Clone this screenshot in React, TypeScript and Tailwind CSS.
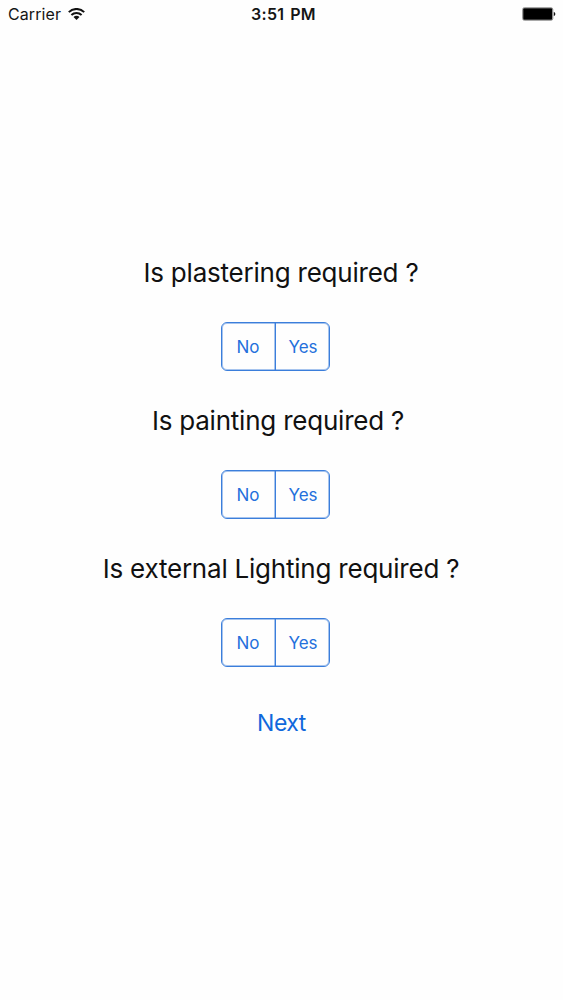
import type { ReactElement } from "react";

interface Question {
  id: string;
  label: string;
  labelClassName: string;
}

const QUESTIONS: readonly Question[] = [
  { id: "plastering", label: "Is plastering required ?", labelClassName: "w-[562px]" },
  { id: "painting", label: "Is painting required ?", labelClassName: "w-[556px]" },
  { id: "lighting", label: "Is external Lighting required ?", labelClassName: "w-[562px]" },
];

function WifiIcon(): ReactElement {
  return (
    <svg className="ml-[7px] h-3 w-[17px]" fill="none" viewBox="0 0 17 12">
      <path d="M0.8 4.1C5.1 -0.1 11.9 -0.1 16.2 4.1" stroke="#111" strokeWidth="2" />
      <path d="M3.4 6.9C6.3 4.2 10.7 4.2 13.6 6.9" stroke="#111" strokeWidth="2" />
      <path d="M5.5 9C7.2 7.3 9.8 7.3 11.5 9L8.5 11.9Z" fill="#111" />
    </svg>
  );
}

function BatteryIcon(): ReactElement {
  return (
    <svg className="h-[14px] w-[34px]" viewBox="0 0 34 14">
      <rect fill="#fff" height="12.6" rx="1.8" stroke="#777" strokeWidth="0.8" width="30.2" x="0.6" y="0.7" />
      <rect fill="#000" height="11.4" rx="1" width="29" x="1.2" y="1.3" />
      <path d="M31.8 5C33.8 5.2 33.8 8.8 31.8 9Z" fill="#111" />
    </svg>
  );
}

function StatusBar(): ReactElement {
  return (
    <header className="grid h-7 grid-cols-3 items-center pl-2 pr-[7px] text-[#151515]">
      <div className="flex items-center text-base tracking-[0.1px]">
        Carrier
        <WifiIcon />
      </div>
      <div className="pl-[3px] text-center text-base font-semibold tracking-[0.3px] [word-spacing:1.5px]">3:51 PM</div>
      <div className="flex justify-end">
        <BatteryIcon />
      </div>
    </header>
  );
}

function SegmentedControl(): ReactElement {
  return (
    <div className="ml-[221px] mt-[29px] flex h-[49px] w-[109px] rounded-md border border-[#3b7edb] text-[17px] text-[#2470dc] shadow-[inset_0_0_0_1px_#3b7edb73]">
      <button className="w-[54px] border-r border-[#3b7edb] pr-px pt-0.5 shadow-[inset_-1px_0_0_0_#3b7edb73]" type="button">
        No
      </button>
      <button className="flex-1 pl-px pt-0.5" type="button">
        Yes
      </button>
    </div>
  );
}

export default function App(): ReactElement {
  return (
    <main className="h-[1000px] w-[563px] overflow-hidden bg-[#fefefe] font-['Inter',sans-serif]">
      <StatusBar />
      <div className="mt-[225px]">
        {QUESTIONS.map((question) => (
          <section className="h-[148px]" key={question.id}>
            <h2 className={`${question.labelClassName} h-10 text-center text-[26px] leading-10 tracking-[-0.22px] text-[#111]`}>
              {question.label}
            </h2>
            <SegmentedControl />
          </section>
        ))}
      </div>
      <button className="block h-[52px] w-[563px] text-[23px] tracking-[-0.5px] text-[#1068dc]" type="button">
        Next
      </button>
    </main>
  );
}
